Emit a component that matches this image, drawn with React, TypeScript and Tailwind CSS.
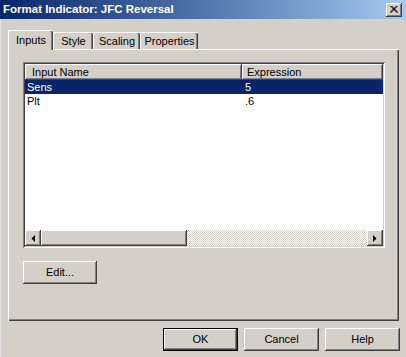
const raised =
  "bg-[#d4d0c8] shadow-[inset_-1px_-1px_0_#404040,inset_1px_1px_0_#ffffff,inset_-2px_-2px_0_#808080,inset_2px_2px_0_#d4d0c8]";

const Tab = ({ label, active, w }: { label: string; active?: boolean; w: string }) => (
  <div
    className={`${w} ${
      active ? "h-[20px] -mb-px z-10 pt-[2px]" : "h-[17px] pt-[1px]"
    } relative flex justify-center bg-[#d4d0c8] border-t border-l border-white rounded-tl-[2px] rounded-tr-[2px] shadow-[inset_-1px_0_0_#404040,inset_-2px_0_0_#808080]`}
  >
    <span className="leading-[14px]">{label}</span>
  </div>
);

const Button = ({ label, def }: { label: string; def?: boolean }) => (
  <div className={`w-[75px] h-[23px] ${def ? "border border-black" : ""}`}>
    <div className={`${raised} w-full h-full flex items-center justify-center`}>{label}</div>
  </div>
);

const Arrow = ({ dir }: { dir: "l" | "r" }) => (
  <div className={`${raised} w-[16px] h-[16px] flex items-center justify-center`}>
    <svg width="4" height="7" viewBox="0 0 4 7">
      {dir === "l" ? <polygon points="4,0 4,7 0.5,3.5" fill="#000" /> : <polygon points="0,0 0,7 3.5,3.5" fill="#000" />}
    </svg>
  </div>
);

const rows = [
  { name: "Sens", expr: "5", sel: true },
  { name: "Plt", expr: ".6" },
];

export default function App() {
  return (
    <div className="w-[406px] h-[357px] bg-[#d4d0c8] flex flex-col overflow-hidden text-[11px] text-black font-['Liberation_Sans',Arial,sans-serif] shadow-[inset_1px_0_0_#e8e6e2]">
      {/* title bar */}
      <div className="h-[19px] flex items-center justify-between pl-[3px] pr-[4px] bg-gradient-to-r from-[#0a246a] to-[#a6caf0]">
        <span className="text-white font-bold text-[11.5px] leading-[19px]">
          Format Indicator: JFC Reversal
        </span>
        <div className={`${raised} w-[16px] h-[14px] flex items-center justify-center`}>
          <svg width="8" height="7" viewBox="0 0 8 7">
            <path d="M0.5 0 L7.5 7 M1.5 0 L8 6.5 M7.5 0 L0.5 7 M6.5 0 L0 6.5" stroke="#000" strokeWidth="1" />
          </svg>
        </div>
      </div>

      {/* tabs */}
      <div className="flex items-end h-[20px] mt-[10px] ml-[8px]">
        <Tab label="Inputs" active w="w-[45px]" />
        <Tab label="Style" w="w-[40px]" />
        <Tab label="Scaling" w="w-[47px]" />
        <Tab label="Properties" w="w-[58px]" />
      </div>

      {/* panel */}
      <div className="ml-[8px] w-[391px] h-[272px] border-t border-l border-white shadow-[inset_-1px_-1px_0_#404040,inset_-2px_-2px_0_#808080] pt-[12px] pl-[14px]">
        {/* list view */}
        <div className="w-[362px] h-[186px] bg-white shadow-[inset_1px_1px_0_#808080,inset_-1px_-1px_0_#ffffff] p-px">
          <div className="w-full h-full shadow-[inset_1px_1px_0_#404040,inset_-1px_-1px_0_#d4d0c8] p-px flex flex-col">
            <div className="flex h-[16px] shrink-0">
              <div className={`${raised} w-[217px] pl-[7px] leading-[16px]`}>Input Name</div>
              <div className={`${raised} flex-1 pl-[5px] leading-[16px]`}>Expression</div>
            </div>
            <div className="flex-1">
              {rows.map((r) => (
                <div
                  key={r.name}
                  className={`flex h-[14px] leading-[14px] ${r.sel ? "bg-[#0a246a] text-white" : ""}`}
                >
                  <div className="w-[217px] pl-[2px]">{r.name}</div>
                  <div className="flex-1 pl-[3px]">{r.expr}</div>
                </div>
              ))}
            </div>
            <div className="flex h-[16px] shrink-0">
              <Arrow dir="l" />
              <div className={`${raised} w-[146px] h-[16px]`} />
              <div className="flex-1 bg-[repeating-conic-gradient(#d4d0c8_0_25%,#ffffff_0_50%)] bg-[length:2px_2px]" />
              <Arrow dir="r" />
            </div>
          </div>
        </div>

        <div className="mt-[13px]">
          <div className={`${raised} w-[74px] h-[23px] flex items-center justify-center`}>Edit...</div>
        </div>
      </div>

      {/* dialog buttons */}
      <div className="flex justify-end gap-[6px] mt-[7px] pr-[6px]">
        <Button label="OK" def />
        <Button label="Cancel" />
        <Button label="Help" />
      </div>
    </div>
  );
}
